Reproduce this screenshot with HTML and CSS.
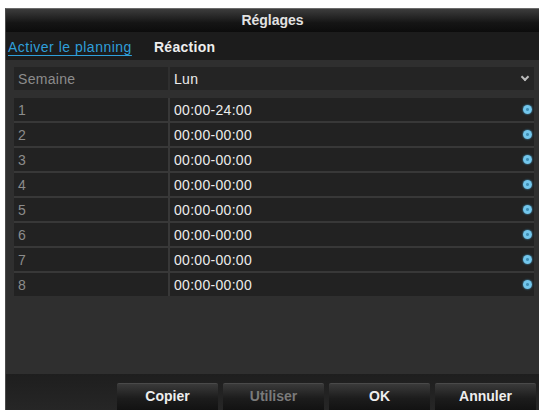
FILE: index.html
```html
<!DOCTYPE html>
<html lang="fr">
<head>
  <meta charset="UTF-8" />
  <title>Réglages</title>
  <link rel="stylesheet" href="styles.css">
</head>
<body>
  <div class="dialog">
    <div class="titlebar">Réglages</div>

    <div class="tabs">
      <span class="tab active">Activer le planning</span>
      <span class="tab">Réaction</span>
    </div>

    <div class="content">
      <div class="row head">
        <div class="cell label">Semaine</div>
        <div class="cell value">Lun <span class="arrow"></span></div>
      </div>

      <div class="rows">
        <div class="row"><div class="cell label">1</div><div class="cell value">00:00-24:00 <span class="dot"></span></div></div>
        <div class="row"><div class="cell label">2</div><div class="cell value">00:00-00:00 <span class="dot"></span></div></div>
        <div class="row"><div class="cell label">3</div><div class="cell value">00:00-00:00 <span class="dot"></span></div></div>
        <div class="row"><div class="cell label">4</div><div class="cell value">00:00-00:00 <span class="dot"></span></div></div>
        <div class="row"><div class="cell label">5</div><div class="cell value">00:00-00:00 <span class="dot"></span></div></div>
        <div class="row"><div class="cell label">6</div><div class="cell value">00:00-00:00 <span class="dot"></span></div></div>
        <div class="row"><div class="cell label">7</div><div class="cell value">00:00-00:00 <span class="dot"></span></div></div>
        <div class="row"><div class="cell label">8</div><div class="cell value">00:00-00:00 <span class="dot"></span></div></div>
      </div>
    </div>

    <div class="footer">
      <button class="btn">Copier</button>
      <button class="btn" disabled>Utiliser</button>
      <button class="btn">OK</button>
      <button class="btn">Annuler</button>
    </div>
  </div>
</body>
</html>
```

FILE: styles.css
```css
body {
  margin: 0;
  background: #ffffff;
  font-family: "Liberation Sans", Arial, sans-serif;
  font-size: 14px;
  letter-spacing: 0.3px;
}

.dialog {
  margin: 8px 0 0 5px;
  width: 534px;
  height: 402px;
  background: #2f2f2f;
  border-top: 1px solid #6a6a6a;
  border-left: 1px solid #4a4a4a;
  box-sizing: border-box;
  display: flex;
  flex-direction: column;
  overflow: hidden;
}

.titlebar {
  height: 23px;
  line-height: 22px;
  text-align: center;
  color: #e2e2e2;
  font-size: 14px;
  font-weight: bold;
  letter-spacing: 0;
  background: linear-gradient(#3c3c3c, #151515 60%, #0c0c0c);
}

.tabs {
  height: 28px;
  box-sizing: border-box;
  padding: 2px 0 0 2px;
  display: flex;
  align-items: center;
  gap: 22px;
  background: #1c1c1c;
}

.tab {
  color: #eeeeee;
  font-size: 14px;
  font-weight: bold;
}

.tab.active {
  color: #2f9fda;
  font-weight: normal;
  letter-spacing: 0.5px;
  text-decoration: underline;
  text-underline-offset: 3px;
}

.content {
  padding: 7px 5px 0 8px;
  flex: 1;
}

.row {
  display: flex;
  gap: 2px;
  height: 23px;
}

.rows {
  margin-top: 8px;
  display: flex;
  flex-direction: column;
  gap: 2px;
  background: #383838;
}

.cell {
  background: #222222;
  display: flex;
  align-items: center;
  padding: 0 4px;
}

.label {
  width: 146px;
  color: #8c8c8c;
}

.value {
  flex: 1;
  color: #ececec;
  justify-content: space-between;
}

.head .cell {
  background: #242424;
}

.arrow {
  width: 4px;
  height: 4px;
  margin: 0 2px 3px 0;
  border-right: 2px solid #bbbbbb;
  border-bottom: 2px solid #bbbbbb;
  transform: rotate(45deg);
}

.dot {
  width: 9px;
  height: 9px;
  border-radius: 50%;
  background: radial-gradient(circle, #3f8fb6 0 1px, #72c6ec 2px);
  box-shadow: 0 0 2px #4ab3e6;
  margin-right: -2px;
}

.footer {
  height: 36px;
  display: flex;
  justify-content: flex-end;
  align-items: flex-end;
  gap: 5px;
  padding-right: 3px;
  background: linear-gradient(#1e1e1e, #262626);
}

.btn {
  width: 101px;
  height: 27px;
  border: none;
  border-top: 1px solid #4a4a4a;
  border-radius: 2px 2px 0 0;
  background: linear-gradient(#3a3a3a, #1c1c1c 55%, #121212);
  color: #eeeeee;
  font-family: "Liberation Sans", Arial, sans-serif;
  font-size: 14px;
  font-weight: bold;
  padding: 0 0 2px;
}

.btn:disabled {
  color: #7a7a7a;
}
```
